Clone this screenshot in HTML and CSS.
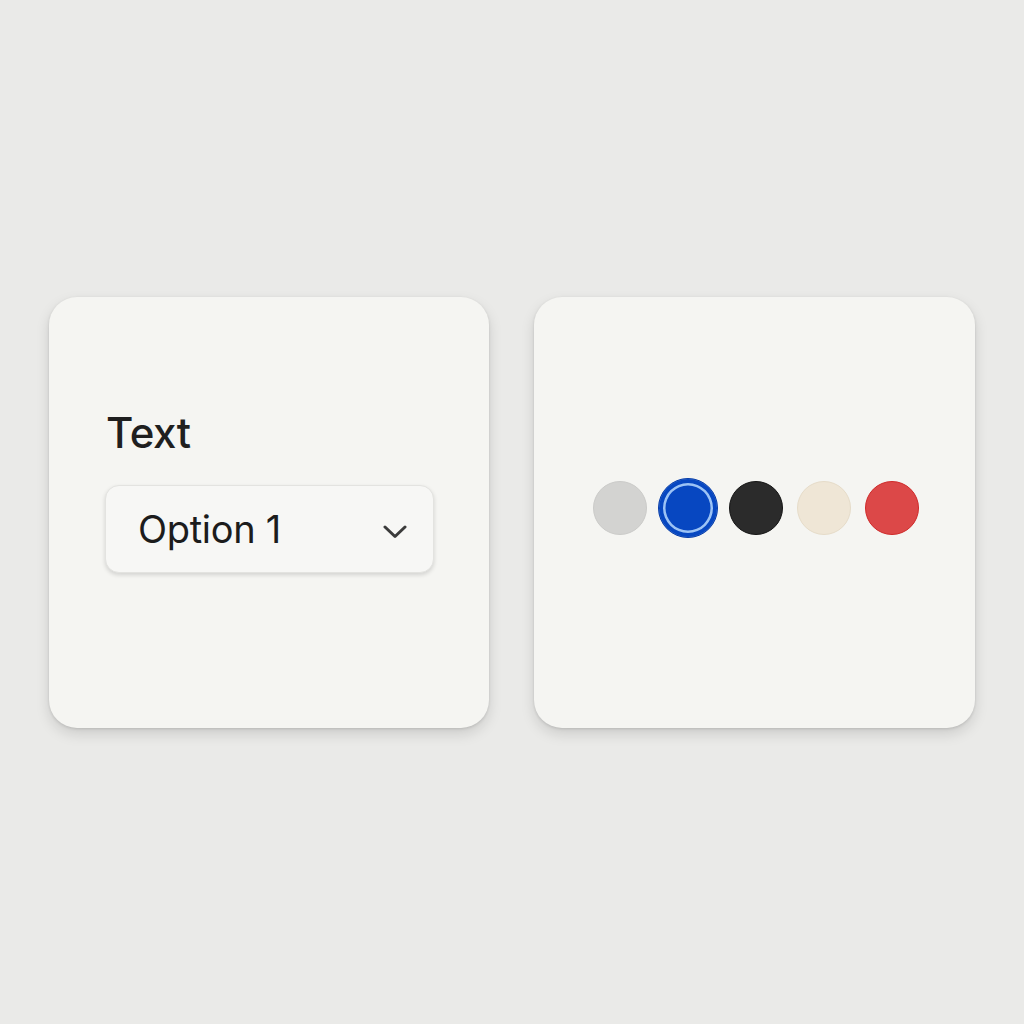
FILE: index.html
```html
<!DOCTYPE html>
<html lang="en">
  <head>
    <meta charset="UTF-8" />
    <meta name="viewport" content="width=device-width, initial-scale=1.0" />
    <title>Components</title>
    <link rel="stylesheet" href="styles.css">
  </head>
  <body>
    <div class="stage">
      <div class="card card-select">
        <label class="field-label" for="option">Text</label>
        <div class="select" id="option">
          <span class="select-value">Option 1</span>
          <svg class="chevron" width="24" height="14" viewBox="0 0 24 14">
            <path d="M2 2 L12 11.5 L22 2" fill="none" stroke="#3b3b3b" stroke-width="3" stroke-linecap="round" stroke-linejoin="round" />
          </svg>
        </div>
      </div>

      <div class="card card-swatches">
        <div class="swatches">
          <span class="swatch swatch-gray"></span>
          <span class="swatch swatch-blue selected"></span>
          <span class="swatch swatch-black"></span>
          <span class="swatch swatch-cream"></span>
          <span class="swatch swatch-red"></span>
        </div>
      </div>
    </div>
  </body>
</html>
```

FILE: styles.css
```css
body {
  margin: 0;
  padding: 0;
  background-color: #eaeae8;
  font-family: "Inter", "Noto Sans", sans-serif;
  color: #222;
}

.stage {
  display: flex;
  justify-content: center;
  align-items: center;
  gap: 45px;
  height: 1024px;
  padding-top: 1px;
  box-sizing: border-box;
}

.card {
  width: 440px;
  height: 431px;
  background-color: #f5f5f2;
  border-radius: 28px;
  box-shadow: 0 6px 14px rgba(0, 0, 0, 0.13), 0 1px 3px rgba(0, 0, 0, 0.12);
  box-sizing: border-box;
}

.card-select {
  display: flex;
  flex-direction: column;
  align-items: flex-start;
  padding: 111px 0 0 57px;
}

.field-label {
  font-size: 42px;
  line-height: 50px;
  font-weight: 480;
  color: #1f1f1f;
  letter-spacing: -0.4px;
}

.select {
  display: flex;
  align-items: center;
  justify-content: space-between;
  width: 329px;
  height: 88px;
  margin-top: 27px;
  margin-left: -1px;
  padding: 0 26px 0 32px;
  box-sizing: border-box;
  background-color: #f7f7f5;
  border: 1px solid #e3e3e0;
  border-radius: 14px;
  box-shadow: 0 2px 4px rgba(0, 0, 0, 0.14);
}

.select-value {
  font-size: 38px;
  font-weight: 420;
  color: #1c1c1c;
  letter-spacing: -0.3px;
}

.chevron {
  margin-top: 6px;
}

.card-swatches {
  display: flex;
  justify-content: center;
  align-items: center;
  width: 441px;
  padding: 0 0 10px 3px;
}

.swatches {
  display: flex;
  align-items: center;
  gap: 14px;
}

.swatch {
  display: block;
  width: 54px;
  height: 54px;
  border-radius: 50%;
  box-sizing: border-box;
}

.swatch-gray {
  background-color: #d3d3d1;
  border: 1px solid #cbcbc9;
}

.swatch-blue {
  width: 60px;
  height: 60px;
  margin: 0 -3px;
  background-color: #0747c1;
  border: 1px solid #0a3ea8;
  box-shadow: inset 0 0 0 4px #0747c1, inset 0 0 0 6.5px #9cc3f5;
}

.swatch-black {
  background-color: #2b2b2b;
  border: 1px solid #151515;
}

.swatch-cream {
  background-color: #efe6d6;
  border: 1px solid #e6dcc9;
}

.swatch-red {
  background-color: #dc4848;
  border: 1px solid #cf2a2a;
}
```
